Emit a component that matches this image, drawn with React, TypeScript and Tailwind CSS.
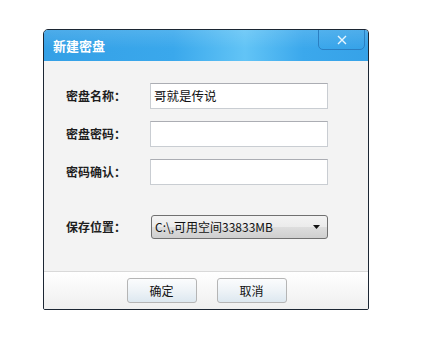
import React from "react";

const font = { fontFamily: '"Noto Sans CJK SC", "Noto Sans", sans-serif' };

function Row({ label, value }: { label: string; value?: string }) {
  return (
    <div className="flex items-center h-[26px]">
      <div className="w-[84px] text-[12px] font-bold text-[#1e1e1e] leading-none">{label}</div>
      <div className="w-[178px] h-[26px] bg-white border border-[#c9cdd2] border-t-[#abadb3] flex items-center pl-[3px] text-[12.5px] text-[#111] leading-none">
        {value}
      </div>
    </div>
  );
}

export default function App() {
  return (
    <div className="w-[423px] h-[339px] bg-white pl-[43px] pt-[29px]" style={font}>
      <div className="w-[326px] h-[281px] border border-[#1c2633] rounded-tl-[5px] rounded-tr-[4px] rounded-b-[2px] flex flex-col overflow-hidden bg-[#f3f3f3]">
        <div className="relative h-[31px] shrink-0 bg-[linear-gradient(90deg,#34a0e6_0%,#3aa8ec_40%,#62c4f6_62%,#3ba8ec_80%,#36a2e8_100%)]">
          <div className="absolute inset-0 bg-[linear-gradient(180deg,rgba(255,255,255,0.12),rgba(255,255,255,0)_60%)]" />
          <div className="absolute left-[9px] top-[9px] text-[13px] font-bold text-white leading-none">新建密盘</div>
          <div className="absolute right-[3px] top-[-1px] w-[47px] h-[21px] border border-[#2b7fc2] rounded-b-[5px] flex items-center justify-center">
            <svg width="10" height="10" viewBox="0 0 10 10">
              <path d="M1 1 L9 9 M9 1 L1 9" stroke="#e8f6ff" strokeWidth="1.4" />
            </svg>
          </div>
        </div>
        <div className="h-[210px] shrink-0 pl-[22px] pt-[22px] flex flex-col">
          <div className="flex flex-col gap-[12px]">
            <Row label="密盘名称：" value="哥就是传说" />
            <Row label="密盘密码：" />
            <Row label="密码确认：" />
          </div>
          <div className="flex items-center mt-[30px] h-[24px]">
            <div className="w-[85px] text-[12px] font-bold text-[#1e1e1e] leading-none">保存位置：</div>
            <div className="w-[177px] h-[24px] border border-[#707070] rounded-[3px] bg-[linear-gradient(180deg,#f3f3f3_0%,#ebebeb_50%,#dddddd_51%,#cfcfcf_100%)] flex items-center pl-[3px] pr-[6px] text-[12px] text-[#111] leading-none">
              <span className="flex-1">C:\,可用空间33833MB</span>
              <svg width="8" height="4" viewBox="0 0 8 4">
                <path d="M0 0 H7 L3.5 4 Z" fill="#111" />
              </svg>
            </div>
          </div>
        </div>
        <div className="flex-1 border-t border-[#d9d9d9] bg-[linear-gradient(180deg,#ffffff,#efefef)] flex justify-center gap-[20px] pt-[6px] pl-[1px]">
          <button className="w-[70px] h-[25px] border border-[#b5b5b5] rounded-[3px] bg-[linear-gradient(180deg,#fbfcfd_0%,#eef3f7_50%,#dde8f0_100%)] text-[12px] text-[#111] leading-none">确定</button>
          <button className="w-[70px] h-[25px] border border-[#b5b5b5] rounded-[3px] bg-[linear-gradient(180deg,#fbfcfd_0%,#eef3f7_50%,#dde8f0_100%)] text-[12px] text-[#111] leading-none">取消</button>
        </div>
      </div>
    </div>
  );
}
